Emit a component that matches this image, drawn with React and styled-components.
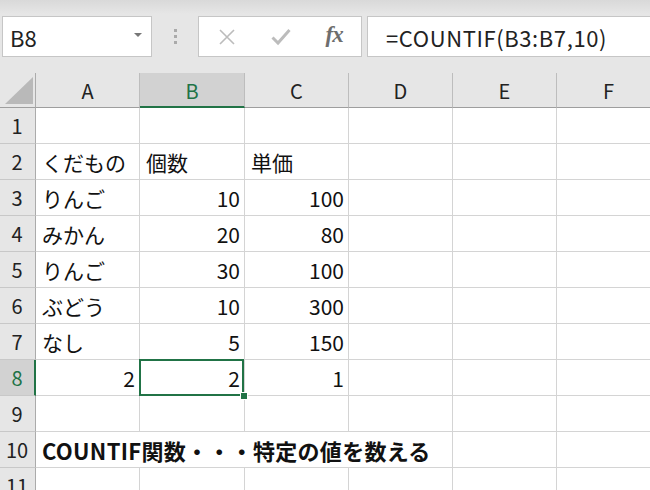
import React from "react"
import styled, { createGlobalStyle } from "styled-components"

const GlobalStyle = createGlobalStyle`
  html, body {
    margin: 0;
    padding: 0;
    background: #e6e6e6;
  }
  body {
    font-family: "Noto Sans CJK JP", "Noto Sans", sans-serif;
  }
`

const green = "#217346"
const gridLine = "#d4d4d4"

const Window = styled.div`
  width: 650px;
  height: 490px;
  overflow: hidden;
  background: #e6e6e6;
  display: flex;
  flex-direction: column;
`

const FormulaRow = styled.div`
  height: 73px;
  flex: none;
  box-sizing: border-box;
  padding: 16px 0 16px 2px;
  display: flex;
  background: linear-gradient(#d9d9d9 0px, #e6e6e6 14px);
`

const NameBox = styled.div`
  width: 150px;
  flex: none;
  box-sizing: border-box;
  background: #fff;
  border: 1px solid #c6c6c6;
  display: flex;
  align-items: center;
  justify-content: space-between;
  padding: 0 9px 0 7px;
  font-size: 22px;
  color: #222;
`

const DropArrow = styled.span`
  width: 0;
  height: 0;
  border-left: 4px solid transparent;
  border-right: 4px solid transparent;
  border-top: 4px solid #777;
  margin-top: -4px;
`

const Grip = styled.div`
  width: 46px;
  flex: none;
  display: flex;
  flex-direction: column;
  align-items: center;
  justify-content: center;
  gap: 3px;
`

const GripDot = styled.span`
  width: 3px;
  height: 3px;
  background: #aaa;
`

const FuncBox = styled.div`
  width: 164px;
  flex: none;
  box-sizing: border-box;
  background: #fff;
  border: 1px solid #c6c6c6;
  display: flex;
  padding-left: 1px;
`

const FuncButton = styled.div`
  width: 54px;
  display: flex;
  align-items: center;
  justify-content: center;
  color: #bcbcbc;
`

const Fx = styled.span`
  font-family: "Liberation Serif", serif;
  font-style: italic;
  font-weight: 700;
  font-size: 23px;
  color: #6e6e6e;
  letter-spacing: -1px;
  margin-top: -3px;
`

const FormulaInput = styled.div`
  flex: 1;
  margin-left: 5px;
  margin-right: -2px;
  box-sizing: border-box;
  background: #fff;
  border: 1px solid #c6c6c6;
  display: flex;
  align-items: center;
  padding-left: 18px;
  font-size: 22px;
  letter-spacing: 0.6px;
  color: #222;
  white-space: nowrap;
`

const Sheet = styled.div`
  display: grid;
  grid-template-columns: 36px 104px 105px 104px 104px 104px 104px;
  grid-template-rows: 35px repeat(11, 36px);
  background: #fff;
`

const Corner = styled.div`
  box-sizing: border-box;
  background: #e6e6e6;
  border-right: 1px solid #ababab;
  border-bottom: 1px solid #9e9e9e;
  display: flex;
  align-items: flex-end;
  justify-content: flex-end;
  padding: 0 2px 3px 0;
`

const ColHead = styled.div`
  box-sizing: border-box;
  background: ${(p) => (p.$active ? "#d2d2d2" : "#e6e6e6")};
  color: ${(p) => (p.$active ? green : "#222")};
  border-right: 1px solid #bdbdbd;
  border-bottom: ${(p) => (p.$active ? `2px solid ${green}` : "1px solid #9e9e9e")};
  display: flex;
  align-items: center;
  justify-content: center;
  font-size: 20px;
  padding-top: ${(p) => (p.$active ? "1px" : "0")};
`

const RowHead = styled.div`
  box-sizing: border-box;
  background: ${(p) => (p.$active ? "#d2d2d2" : "#e6e6e6")};
  color: ${(p) => (p.$active ? green : "#222")};
  border-right: ${(p) => (p.$active ? `2px solid ${green}` : "1px solid #ababab")};
  border-bottom: 1px solid #c8c8c8;
  display: flex;
  align-items: center;
  justify-content: center;
  font-size: 20px;
  padding-right: ${(p) => (p.$active ? "0" : "1px")};
`

const Cell = styled.div`
  box-sizing: border-box;
  position: relative;
  z-index: ${(p) => (p.$active ? 2 : "auto")};
  grid-column: ${(p) => (p.$span ? `span ${p.$span}` : "auto")};
  border-right: 1px solid ${gridLine};
  border-bottom: 1px solid ${gridLine};
  display: flex;
  align-items: center;
  justify-content: ${(p) => (p.$right ? "flex-end" : "flex-start")};
  padding: 0 4px 0 6px;
  font-size: ${(p) => (p.$bold ? "22px" : "21px")};
  letter-spacing: ${(p) => (p.$bold ? "0.3px" : "0")};
  font-weight: ${(p) => (p.$bold ? 700 : 400)};
  color: #111;
  white-space: nowrap;
`

const Selection = styled.div`
  position: absolute;
  left: -1px;
  top: -1px;
  right: 0;
  bottom: -1px;
  border: 2px solid ${green};
  pointer-events: none;
`

const FillHandle = styled.div`
  position: absolute;
  right: -4px;
  bottom: -5px;
  width: 6px;
  height: 6px;
  background: ${green};
  border: 1px solid #fff;
`

const columns = ["A", "B", "C", "D", "E", "F"]

const rows = [
  [],
  [{ v: "くだもの" }, { v: "個数" }, { v: "単価" }],
  [{ v: "りんご" }, { v: "10", r: true }, { v: "100", r: true }],
  [{ v: "みかん" }, { v: "20", r: true }, { v: "80", r: true }],
  [{ v: "りんご" }, { v: "30", r: true }, { v: "100", r: true }],
  [{ v: "ぶどう" }, { v: "10", r: true }, { v: "300", r: true }],
  [{ v: "なし" }, { v: "5", r: true }, { v: "150", r: true }],
  [{ v: "2", r: true }, { v: "2", r: true, active: true }, { v: "1", r: true }],
  [],
  [{ v: "COUNTIF関数・・・特定の値を数える", bold: true, span: 4 }],
  [],
]

const CancelIcon = () => (
  <svg width="18" height="18" viewBox="0 0 18 18">
    <path d="M2 2 L16 16 M16 2 L2 16" stroke="currentColor" strokeWidth="1.6" fill="none" />
  </svg>
)

const CheckIcon = () => (
  <svg width="20" height="18" viewBox="0 0 20 18">
    <path d="M1.5 9.5 L7 15 L18.5 2" stroke="currentColor" strokeWidth="3" fill="none" />
  </svg>
)

const CornerMark = () => (
  <svg width="28" height="27" viewBox="0 0 28 27">
    <polygon points="0,27 28,27 28,0" fill="#b9b9b9" />
  </svg>
)

const SheetRow = ({ index, cells }) => {
  const filled = []
  let used = 0
  cells.forEach((c, i) => {
    filled.push(
      <Cell key={i} $right={c.r} $bold={c.bold} $span={c.span} $active={c.active}>
        {c.v}
        {c.active && (
          <>
            <Selection />
            <FillHandle />
          </>
        )}
      </Cell>
    )
    used += c.span || 1
  })
  for (let i = used; i < columns.length; i++) filled.push(<Cell key={"e" + i} />)
  return (
    <>
      <RowHead $active={index === 8}>{index}</RowHead>
      {filled}
    </>
  )
}

const App = () => {
  return (
    <Window>
      <GlobalStyle />
      <FormulaRow>
        <NameBox>
          <span>B8</span>
          <DropArrow />
        </NameBox>
        <Grip>
          <GripDot />
          <GripDot />
          <GripDot />
        </Grip>
        <FuncBox>
          <FuncButton>
            <CancelIcon />
          </FuncButton>
          <FuncButton>
            <CheckIcon />
          </FuncButton>
          <FuncButton>
            <Fx>fx</Fx>
          </FuncButton>
        </FuncBox>
        <FormulaInput>=COUNTIF(B3:B7,10)</FormulaInput>
      </FormulaRow>
      <Sheet>
        <Corner>
          <CornerMark />
        </Corner>
        {columns.map((c) => (
          <ColHead key={c} $active={c === "B"}>
            {c}
          </ColHead>
        ))}
        {rows.map((cells, i) => (
          <SheetRow key={i} index={i + 1} cells={cells} />
        ))}
      </Sheet>
    </Window>
  )
}

export default App
